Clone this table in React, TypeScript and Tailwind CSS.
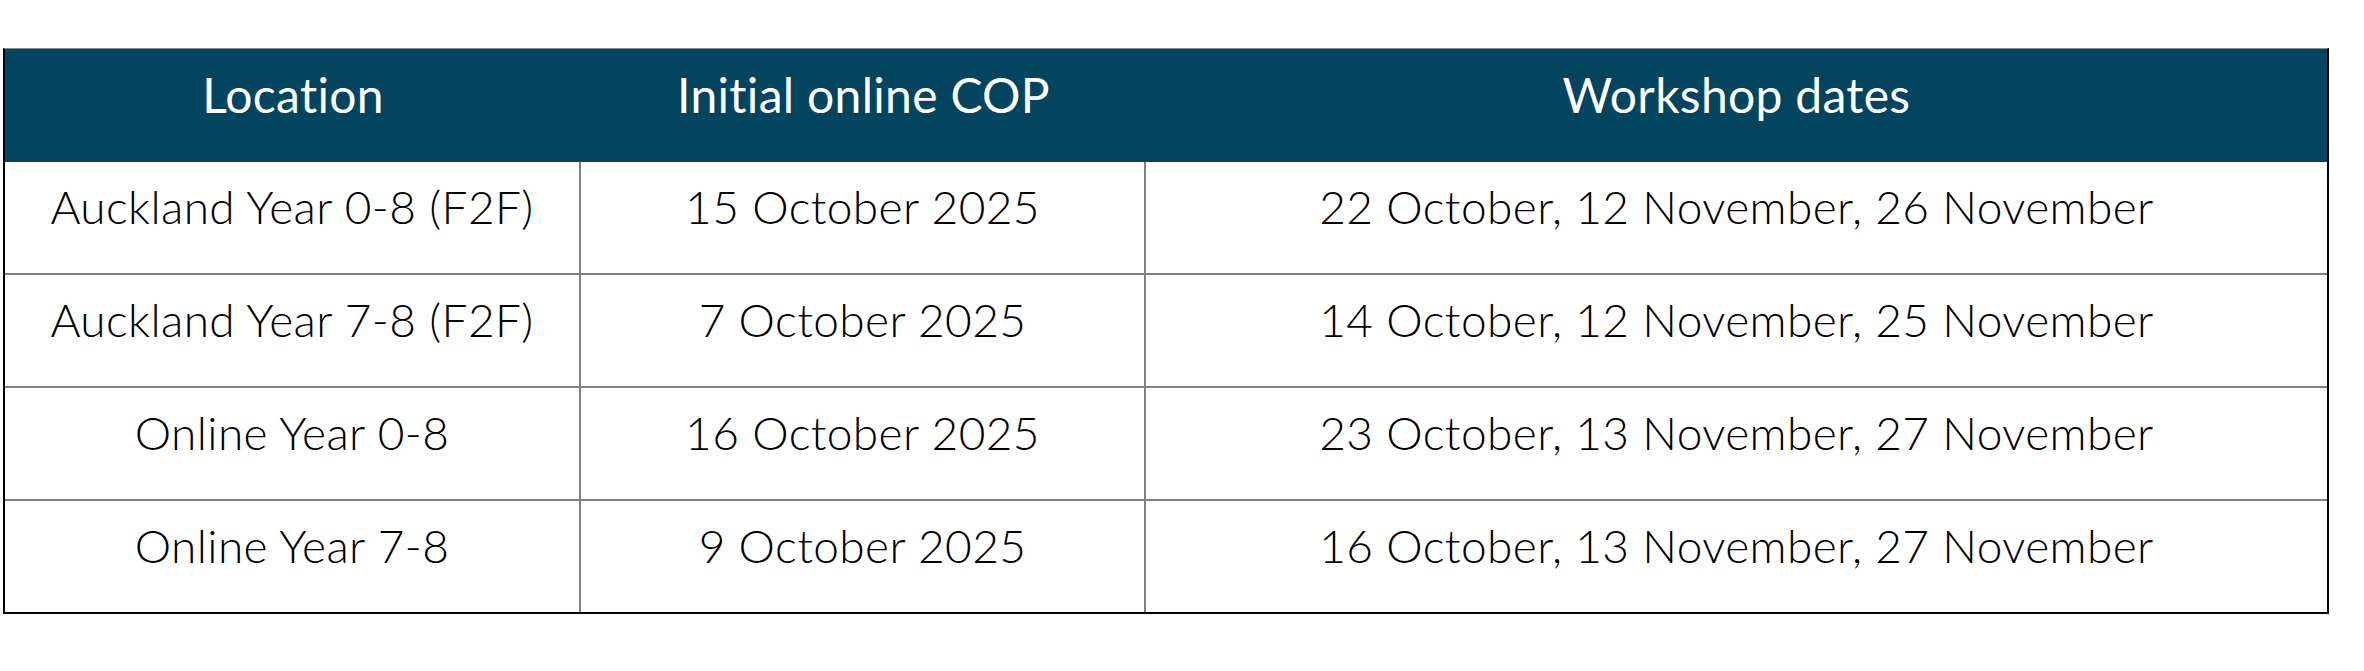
import React from "react";

const rows = [
  ["Auckland Year 0-8 (F2F)", "15 October 2025", "22 October, 12 November, 26 November"],
  ["Auckland Year 7-8 (F2F)", "7 October 2025", "14 October, 12 November, 25 November"],
  ["Online Year 0-8", "16 October 2025", "23 October, 13 November, 27 November"],
  ["Online Year 7-8", "9 October 2025", "16 October, 13 November, 27 November"],
];

export default function App() {
  return (
    <div className="w-[2364px] h-[671px] bg-white pt-[48px] pl-[3px]" style={{ fontFamily: "Lato, 'Open Sans', sans-serif" }}>
      <div className="w-[2326px] border-x-2 border-b-2 border-black border-t border-t-[#7d8f99]">
        <div className="grid grid-cols-[576px_565px_1fr] h-[113px] bg-[#03445f] text-white text-[48px] font-normal tracking-[0.3px]">
          <div className="flex items-center justify-center pb-[22px]">Location</div>
          <div className="flex items-center justify-center pb-[22px]">Initial online COP</div>
          <div className="flex items-center justify-center pb-[22px]">Workshop dates</div>
        </div>
        {rows.map((r, i) => (
          <div
            key={i}
            className={`grid grid-cols-[576px_565px_1fr] text-black text-[46px] font-light tracking-[0.4px] ${i === 0 ? "h-[111px]" : "h-[113px] border-t-2 border-[#808080]"}`}
          >
            <div className="flex items-center justify-center pb-[22px] border-r-2 border-[#808080]">{r[0]}</div>
            <div className="flex items-center justify-center pb-[22px] border-r-2 border-[#808080]">{r[1]}</div>
            <div className="flex items-center justify-center pb-[22px]">{r[2]}</div>
          </div>
        ))}
      </div>
    </div>
  );
}
